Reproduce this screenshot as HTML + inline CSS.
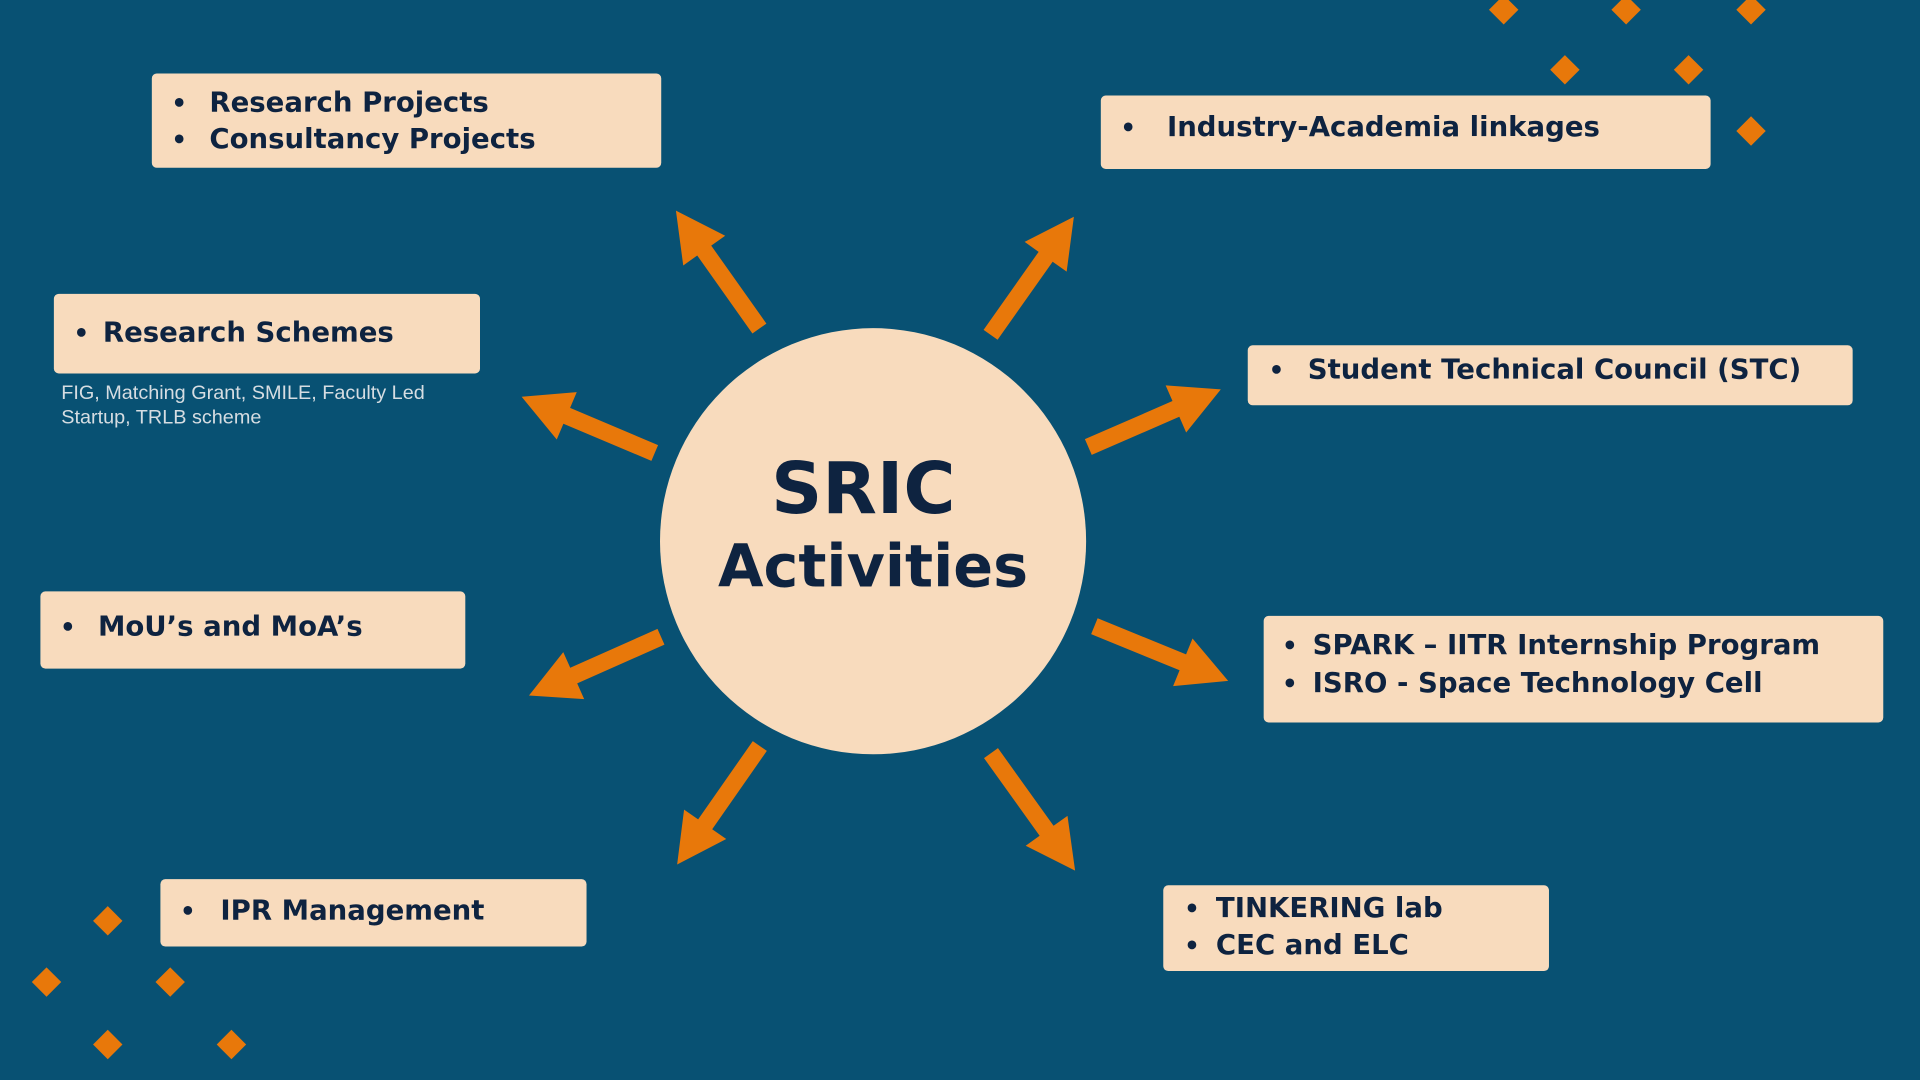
<!DOCTYPE html>
<html><head><meta charset="utf-8"><style>
html,body{margin:0;padding:0;width:1920px;height:1080px;overflow:hidden;background:#085173}
#s{position:absolute;left:0;top:0;width:1568px;height:882px;transform:scale(1.22449);transform-origin:0 0}
.b{position:absolute;background:#f8dbbd;border-radius:4px}
.t{position:absolute;font-family:"DejaVu Sans","Liberation Sans",sans-serif;font-weight:bold;font-size:22.5px;color:#0e2340;white-space:nowrap;line-height:30px}
.d{position:absolute;font-family:"DejaVu Sans",sans-serif;font-weight:bold;font-size:20px;color:#0e2340;line-height:30px}
.dm{position:absolute;width:17px;height:17px;background:#e8780a;transform:translate(-50%,-50%) rotate(45deg)}
.sm{position:absolute;font-family:"Liberation Sans",sans-serif;font-size:16.2px;color:#d6dde2;line-height:20px}
</style></head><body><div id="s">
<svg width="1568" height="882" style="position:absolute;left:0;top:0">
<circle cx="713" cy="442" r="174" fill="#f8dbbd"/>
<defs><polygon id="a" points="0,0 -40,-21 -40,-7 -118,-7 -118,7 -40,7 -40,21" fill="#e8780a"/></defs>
<use href="#a" transform="translate(552,172) rotate(-125.3)"/>
<use href="#a" transform="translate(877,177) rotate(-54.8)"/>
<use href="#a" transform="translate(426,324) rotate(-157.1)"/>
<use href="#a" transform="translate(997,318) rotate(-23.5)"/>
<use href="#a" transform="translate(432,568) rotate(156)"/>
<use href="#a" transform="translate(1003,556) rotate(22.2)"/>
<use href="#a" transform="translate(553,706) rotate(124.9)"/>
<use href="#a" transform="translate(878,711) rotate(54.4)"/>
<text x="705" y="419" text-anchor="middle" font-family="DejaVu Sans,sans-serif" font-weight="bold" font-size="58" fill="#0e2340">SRIC</text>
<text x="713" y="479" text-anchor="middle" font-family="DejaVu Sans,sans-serif" font-weight="bold" font-size="48" fill="#0e2340">Activities</text>
</svg>
<div class="dm" style="left:1228px;top:8px"></div><div class="dm" style="left:1328px;top:8px"></div><div class="dm" style="left:1430px;top:8px"></div>
<div class="dm" style="left:1278px;top:57px"></div><div class="dm" style="left:1379px;top:57px"></div><div class="dm" style="left:1430px;top:107px"></div>
<div class="dm" style="left:88px;top:752px"></div><div class="dm" style="left:38px;top:802px"></div><div class="dm" style="left:139px;top:802px"></div>
<div class="dm" style="left:88px;top:853px"></div><div class="dm" style="left:189px;top:853px"></div>

<div class="b" style="left:124px;top:60px;width:416px;height:77px"></div>
<div class="d" style="left:140px;top:69px">•</div><div class="t" style="left:171px;top:69px">Research Projects</div>
<div class="d" style="left:140px;top:99px">•</div><div class="t" style="left:171px;top:99px">Consultancy Projects</div>

<div class="b" style="left:44px;top:240px;width:348px;height:65px"></div>
<div class="d" style="left:60px;top:257px">•</div><div class="t" style="left:84px;top:257px">Research Schemes</div>
<div class="sm" style="left:50px;top:311px">FIG, Matching Grant, SMILE, Faculty Led<br>Startup, TRLB scheme</div>

<div class="b" style="left:33px;top:483px;width:347px;height:63px"></div>
<div class="d" style="left:49px;top:497px">•</div><div class="t" style="left:80px;top:497px">MoU’s and MoA’s</div>

<div class="b" style="left:131px;top:718px;width:348px;height:55px"></div>
<div class="d" style="left:147px;top:729px">•</div><div class="t" style="left:180px;top:729px">IPR Management</div>

<div class="b" style="left:899px;top:78px;width:498px;height:60px"></div>
<div class="d" style="left:915px;top:89px">•</div><div class="t" style="left:953px;top:89px">Industry-Academia linkages</div>

<div class="b" style="left:1019px;top:282px;width:494px;height:49px"></div>
<div class="d" style="left:1036px;top:287px">•</div><div class="t" style="left:1068px;top:287px">Student Technical Council (STC)</div>

<div class="b" style="left:1032px;top:503px;width:506px;height:87px"></div>
<div class="d" style="left:1047px;top:512px">•</div><div class="t" style="left:1072px;top:512px">SPARK – IITR Internship Program</div>
<div class="d" style="left:1047px;top:543px">•</div><div class="t" style="left:1072px;top:543px">ISRO - Space Technology Cell</div>

<div class="b" style="left:950px;top:723px;width:315px;height:70px"></div>
<div class="d" style="left:967px;top:727px">•</div><div class="t" style="left:993px;top:727px">TINKERING lab</div>
<div class="d" style="left:967px;top:757px">•</div><div class="t" style="left:993px;top:757px">CEC and ELC</div>
</div></body></html>
